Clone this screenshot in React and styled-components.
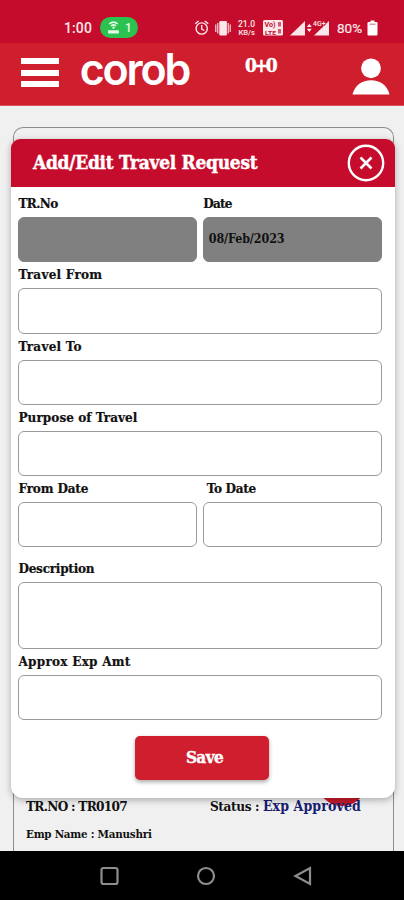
import React from 'react'
import styled, { createGlobalStyle } from 'styled-components'

const GlobalStyle = createGlobalStyle`
  * { box-sizing: border-box; }
  body {
    margin: 0;
    background: #f0f0f0;
    font-family: "DejaVu Serif Condensed", "DejaVu Serif", serif;
    font-stretch: condensed;
    font-weight: bold;
  }
`

const Screen = styled.div`
  position: relative;
  display: flex;
  flex-direction: column;
  width: 404px;
  height: 900px;
  overflow: hidden;
`

const StatusBar = styled.div`
  display: flex;
  height: 43px;
  padding: 13px 24px 0 64px;
  background: #c60c2c;
  color: #fbe6ea;
  font: 500 14px/30px Roboto, sans-serif;
`

const Clock = styled.span`
  width: 36px;
  letter-spacing: 0.1px;
`

const Hotspot = styled.span`
  display: flex;
  align-items: center;
  gap: 6px;
  width: 38px;
  height: 21px;
  margin-top: 4px;
  padding-left: 8px;
  border-radius: 11px;
  background: #2cc24f;
  color: #e3fbe9;
  font-size: 12px;
`

const HotspotIcon = styled.svg`
  width: 11px;
  height: 13px;
`

const StatusIcons = styled.svg`
  width: 142px;
  height: 30px;
  margin-left: 54px;
`

const Battery = styled.span`
  width: 30px;
  margin-left: 3px;
  font-size: 13.5px;
  font-weight: 400;
  -webkit-text-stroke: 0.2px #fbe6ea;
`

const BatteryIcon = styled.svg`
  width: 11px;
  height: 16px;
  margin-top: 6.5px;
`

const AppBar = styled.header`
  display: flex;
  height: 63px;
  padding: 0 14px 0 21px;
  background: #cf1e2e;
  border-bottom: 1px solid #d9515c;
`

const MenuButton = styled.div`
  display: flex;
  flex-direction: column;
  gap: 5.5px;
  width: 38px;
  margin-top: 15px;
`

const MenuLine = styled.div`
  height: 6px;
  background: #fff;
`

const Logo = styled.svg`
  width: 112px;
  height: 40px;
  margin: 5px 0 0 20px;
  overflow: visible;
`

const Counter = styled.div`
  width: 40px;
  margin: 10px 0 0 54px;
  color: #fff;
  font-size: 19px;
  line-height: 24px;
  letter-spacing: -2.7px;
  -webkit-text-stroke: 0.4px #fff;
`

const Avatar = styled.svg`
  width: 38px;
  height: 38px;
  margin: 15px 0 0 auto;
`

const Page = styled.main`
  display: flex;
  height: 745px;
  padding: 21px 10px 0 13px;
`

const RequestCard = styled.section`
  display: flex;
  flex-direction: column;
  justify-content: flex-end;
  width: 381px;
  padding: 0 12px 7px;
  border: 1px solid #8d8d8d;
  border-bottom: 0;
  border-radius: 10px 10px 0 0;
`

const CardRow = styled.div`
  position: relative;
  z-index: 1;
  display: flex;
  height: ${p => p.$height}px;
  align-items: flex-start;
`

const CardText = styled.span`
  width: ${p => p.$width || 'auto'};
  color: ${p => p.$color || '#111'};
  font-size: ${p => p.$size || 13.5}px;
  line-height: 18px;
  letter-spacing: ${p => p.$spacing || 0}px;
  white-space: pre;
`

// add button, mostly hidden behind the dialog
const FloatingButton = styled.div`
  position: absolute;
  left: 317px;
  top: 757px;
  width: 50px;
  height: 49px;
  border-radius: 50%;
  background: #c91a2b;
`

const Dialog = styled.div`
  position: absolute;
  z-index: 2;
  left: 11px;
  top: 139px;
  width: 383.5px;
  height: 659px;
  border-radius: 9px 9px 12px 12px;
  background: #fff;
  box-shadow: 0 2px 7px rgba(0, 0, 0, 0.3);
  overflow: hidden;
`

const DialogHeader = styled.div`
  display: flex;
  align-items: center;
  justify-content: space-between;
  height: 48px;
  padding: 0 10px 0 22px;
  background: #c60c2c;
  color: #fff;
`

const Title = styled.h1`
  margin: 0 0 3px;
  font-size: 19px;
  letter-spacing: -0.3px;
  white-space: nowrap;
  -webkit-text-stroke: 0.4px #fff;
`

const CloseIcon = styled.svg`
  width: 38px;
  height: 38px;
`

const Form = styled.div`
  padding: 8px 13px 0 7px;
`

const FieldRow = styled.div`
  display: flex;
  gap: 6px;
  margin-bottom: ${p => p.$gap || 0}px;
`

const Field = styled.div`
  flex: 1;
  min-width: 0;
`

const Label = styled.label`
  display: block;
  height: 18px;
  padding-left: ${p => p.$indent || 0.5}px;
  margin-bottom: 4px;
  color: #111;
  font-size: 13.4px;
  line-height: 17.6px;
  letter-spacing: ${p => p.$spacing || 0}px;
  white-space: nowrap;
  -webkit-text-stroke: 0.2px #111;
`

const Input = styled.div`
  height: ${p => p.$height || 45.3}px;
  margin-bottom: 4px;
  padding: 0 5px;
  border: 1px solid ${p => (p.$disabled ? '#808080' : '#9a9a9a')};
  border-radius: 6px;
  background: ${p => (p.$disabled ? '#808080' : '#fff')};
  color: #111;
  font-size: 12.4px;
  line-height: 41px;
  letter-spacing: -0.1px;
`

const SaveButton = styled.button`
  display: block;
  width: 134px;
  height: 44px;
  margin: 12px 0 0 117px;
  padding: 0 0 2px 5px;
  border: 0;
  border-radius: 5px;
  background: #cf1e2e;
  box-shadow: 0 2px 4px rgba(0, 0, 0, 0.35);
  color: #fff;
  font: inherit;
  font-size: 17px;
  letter-spacing: -0.6px;
  -webkit-text-stroke: 0.4px #fff;
`

const NavBar = styled.nav`
  height: 49px;
  background: #000;
`

const NavIcons = styled.svg`
  display: block;
  width: 404px;
  height: 49px;
`

export default function App() {
  return (
    <Screen>
      <GlobalStyle />
      <StatusBar>
        <Clock>1:00</Clock>
        <Hotspot>
          <HotspotIcon viewBox="0 0 11 13" fill="none" stroke="#e3fbe9">
            <path d="M1.2 3 Q5.5 -0.8 9.8 3 M3 5 Q5.5 2.8 8 5" strokeWidth="1.5" />
            <circle cx="5.5" cy="6.6" r="1.2" fill="#e3fbe9" stroke="none" />
            <rect x="0" y="9.2" width="11" height="3.3" rx="0.8" fill="#e3fbe9" stroke="none" />
          </HotspotIcon>
          1
        </Hotspot>
        <StatusIcons viewBox="192 13 142 30" fill="#fbe6ea">
          <g fill="none" stroke="#fbe6ea" strokeWidth="1.4">
            <circle cx="201.7" cy="28.5" r="5.6" />
            <path d="M201.7 25 V29 L204.3 30.5 M195.2 23.8 L198.6 21 M208.2 23.8 L204.8 21" />
            <path d="M215.8 24.5 V32 M217.8 23 V33.5 M228.2 23 V33.5 M230.2 24.5 V32" strokeWidth="1.1" />
          </g>
          <rect x="219.3" y="21" width="7.6" height="14.5" rx="1.2" />
          <text x="238" y="26.9" fontSize="8.4" textLength="17" lengthAdjust="spacingAndGlyphs">21.0</text>
          <text x="238.5" y="35" fontSize="7" textLength="16.5" lengthAdjust="spacingAndGlyphs">KB/s</text>
          <rect x="263" y="20" width="20" height="15.6" rx="1.5" />
          <g fill="#c60c2c" fontWeight="700">
            <text x="264.5" y="26.6" fontSize="6.4" textLength="11" lengthAdjust="spacingAndGlyphs">Vo)</text>
            <text x="265" y="34.6" fontSize="6.2" textLength="11" lengthAdjust="spacingAndGlyphs">LTE</text>
            <path d="M278 22 H281 V26.5 H278 Z M278 29 H281 V33.5 H278 Z" opacity="0.65" />
          </g>
          <path d="M290 35.5 L305 21 V35.5 Z" />
          <path d="M306.8 27 L309.3 23.8 L311.8 27 Z M306.8 28.8 L309.3 32 L311.8 28.8 Z" />
          <path d="M314 35.5 L329 21 V35.5 Z" />
          <text x="313" y="26" fontSize="7.5" textLength="12.5" lengthAdjust="spacingAndGlyphs" stroke="#c60c2c" strokeWidth="1.2" paintOrder="stroke">4G+</text>
        </StatusIcons>
        <Battery>80%</Battery>
        <BatteryIcon viewBox="0 0 11 16" fill="#fff">
          <path d="M3.5 0.5 H7.5 V2 H9.5 Q10.5 2 10.5 3 V14.5 Q10.5 15.5 9.5 15.5 H1.5 Q0.5 15.5 0.5 14.5 V3 Q0.5 2 1.5 2 H3.5 Z" />
          <rect x="2.5" y="3.6" width="6" height="1.2" fill="#e2798b" />
        </BatteryIcon>
      </StatusBar>
      <AppBar>
        <MenuButton>
          <MenuLine />
          <MenuLine />
          <MenuLine />
        </MenuButton>
        <Logo viewBox="79 48 112 40" fill="#fff">
          <text
            x="79.7"
            y="84.7"
            fontFamily="Inter, sans-serif"
            fontSize="43.5"
            fontWeight="600"
            letterSpacing="-2.2"
            textLength="109.5"
            lengthAdjust="spacingAndGlyphs"
          >
            corob
          </text>
        </Logo>
        <Counter>0+0</Counter>
        <Avatar viewBox="0 0 38 38" fill="#fff">
          <circle cx="19" cy="10.3" r="9.9" />
          <path d="M0.5 36.5 C3 27 10 22.3 19 22.3 S35 27 37.5 36.5 Z" />
        </Avatar>
      </AppBar>
      <Page>
        <RequestCard>
          <CardRow $height={28}>
            <CardText $width="184px" $spacing={-0.7}>TR.NO : TR0107</CardText>
            <CardText $spacing={-0.4}>Status : </CardText>
            <CardText $color="#17206f" $size={14} $spacing={0.1}>Exp Approved</CardText>
          </CardRow>
          <CardRow $height={19}>
            <CardText $size={11.5} $spacing={-0.25}>Emp Name : Manushri</CardText>
          </CardRow>
        </RequestCard>
      </Page>
      <FloatingButton />
      <Dialog>
        <DialogHeader>
          <Title>Add/Edit Travel Request</Title>
          <CloseIcon viewBox="0 0 38 38" fill="none" stroke="#fff">
            <circle cx="19" cy="19" r="17.2" strokeWidth="2.4" />
            <path d="M13.5 13.5 L24.5 24.5 M24.5 13.5 L13.5 24.5" strokeWidth="2.6" />
          </CloseIcon>
        </DialogHeader>
        <Form>
          <FieldRow>
            <Field>
              <Label $spacing={-0.6}>TR.No</Label>
              <Input $disabled />
            </Field>
            <Field>
              <Label $spacing={-0.8}>Date</Label>
              <Input $disabled>08/Feb/2023</Input>
            </Field>
          </FieldRow>
          <FieldRow>
            <Field>
              <Label $spacing={0.25}>Travel From</Label>
              <Input />
            </Field>
          </FieldRow>
          <FieldRow>
            <Field>
              <Label $spacing={0.25}>Travel To</Label>
              <Input />
            </Field>
          </FieldRow>
          <FieldRow>
            <Field>
              <Label $spacing={0.05}>Purpose of Travel</Label>
              <Input />
            </Field>
          </FieldRow>
          <FieldRow $gap={8.5}>
            <Field>
              <Label $spacing={-0.15}>From Date</Label>
              <Input />
            </Field>
            <Field>
              <Label $indent={4} $spacing={-0.3}>To Date</Label>
              <Input />
            </Field>
          </FieldRow>
          <FieldRow>
            <Field>
              <Label $spacing={-0.25}>Description</Label>
              <Input $height={67} />
            </Field>
          </FieldRow>
          <FieldRow>
            <Field>
              <Label $spacing={0.25}>Approx Exp Amt</Label>
              <Input />
            </Field>
          </FieldRow>
          <SaveButton>Save</SaveButton>
        </Form>
      </Dialog>
      <NavBar>
        <NavIcons viewBox="0 0 404 49" fill="none" stroke="#8e8e8e" strokeWidth="2.2">
          <rect x="101.5" y="17" width="16" height="16" rx="2" />
          <circle cx="206" cy="25" r="8" />
          <path d="M295.5 25 L310 17 V33 Z" />
        </NavIcons>
      </NavBar>
    </Screen>
  )
}
